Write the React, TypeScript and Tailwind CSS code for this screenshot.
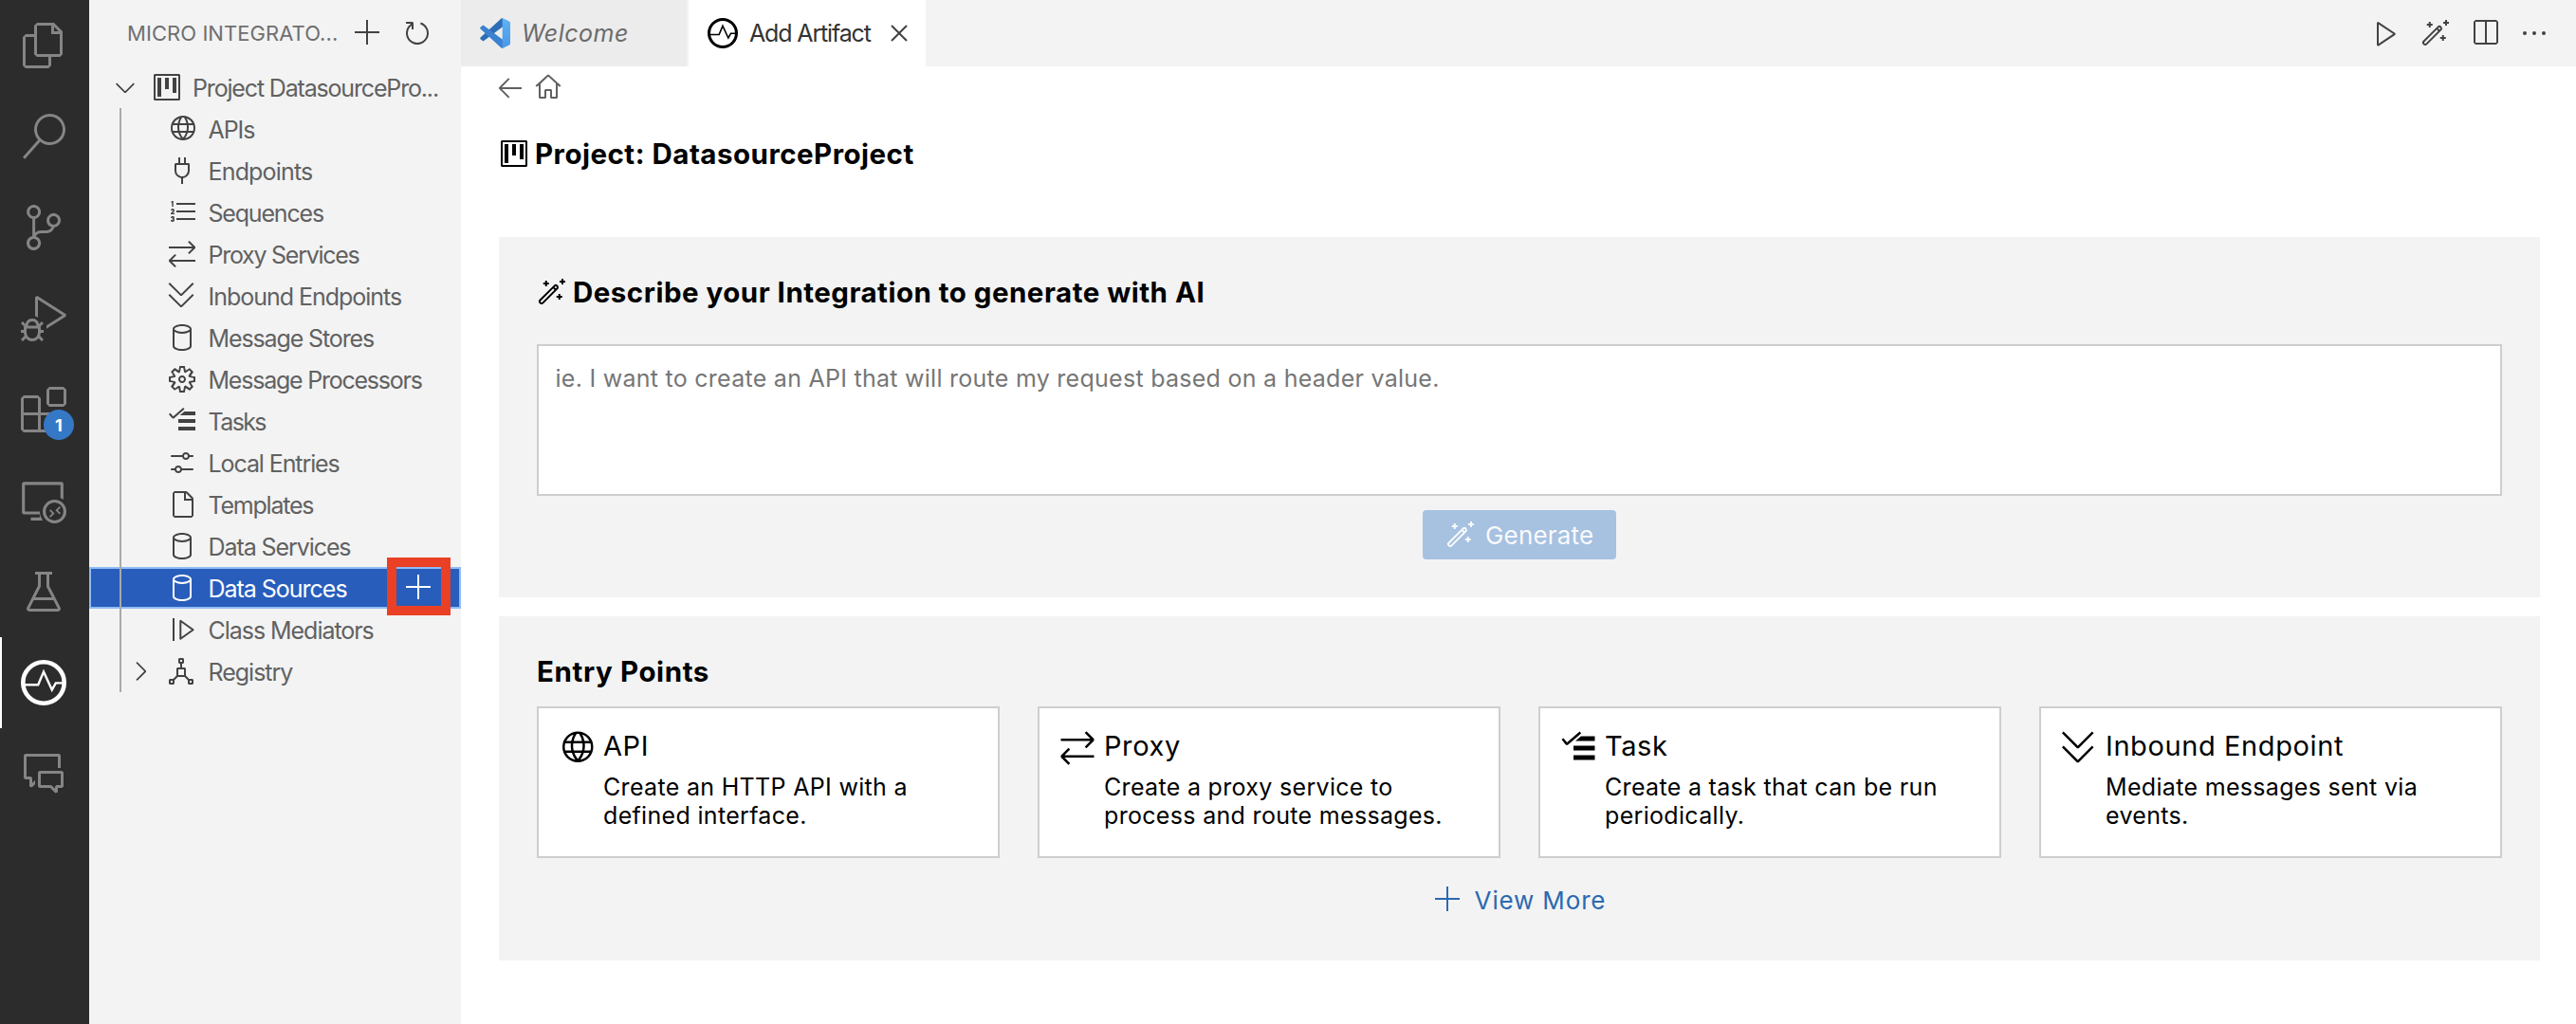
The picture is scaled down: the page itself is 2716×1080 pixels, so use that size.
import type { ReactNode } from "react";
import type { IconType } from "react-icons";
import {
  VscAdd,
  VscArrowLeft,
  VscArrowSwap,
  VscBeaker,
  VscChevronDown,
  VscChevronRight,
  VscClose,
  VscCommentDiscussion,
  VscDatabase,
  VscDebugAlt,
  VscEllipsis,
  VscExtensions,
  VscFile,
  VscFiles,
  VscFoldDown,
  VscGear,
  VscGlobe,
  VscHome,
  VscListOrdered,
  VscPlay,
  VscPlug,
  VscProject,
  VscRefresh,
  VscRemoteExplorer,
  VscSearch,
  VscSettings,
  VscSourceControl,
  VscSplitHorizontal,
  VscTasklist,
  VscTypeHierarchy,
  VscWand,
} from "react-icons/vsc";

function PulseLogo({ className }: { className: string }) {
  return (
    <svg viewBox="0 0 48 48" fill="none" stroke="currentColor" className={className}>
      <circle cx="24" cy="24" r="21.7" strokeWidth="4.6" />
      <path d="M4 26.2H18.2L24 12.5L32.8 31.6L36.8 24.4H44" strokeWidth="2.4" />
    </svg>
  );
}

function VsCodeLogo({ className }: { className: string }) {
  return (
    <svg viewBox="0 0 32 32" className={className}>
      <defs>
        <linearGradient id="vsc-bar" x1="0" y1="0" x2="0" y2="1">
          <stop offset="0" stopColor="#5fb3f1" />
          <stop offset="1" stopColor="#4a97e8" />
        </linearGradient>
      </defs>
      <path d="M22.5 0.5L0.6 20.4c-.6.5-.6 1.300 0 1.800l1.800 1.600c.5.5 1.200.5 1.800.1L24 9.200V0z" fill="#2d6db6" />
      <path d="M22.5 31.500L0.6 11.600c-.6-.5-.6-1.300 0-1.800l1.800-1.600c.5-.5 1.200-.5 1.800-.1L24 22.800V32z" fill="#3a82cf" />
      <path d="M23.700 0L30.900 3.400C31.600 3.700 32 4.400 32 5.200V26.800C32 27.600 31.600 28.300 30.900 28.600L23.700 32Z" fill="url(#vsc-bar)" />
    </svg>
  );
}

function StepBarIcon({ className }: { className?: string }) {
  return (
    <svg viewBox="0 0 32 32" fill="none" stroke="currentColor" strokeWidth="2" className={className}>
      <path d="M7 4V28" />
      <path d="M14.3 6.800V25.800L27.600 16.300Z" strokeLinejoin="round" />
    </svg>
  );
}

const activities: { icon: IconType; badge?: string }[] = [
  { icon: VscFiles },
  { icon: VscSearch },
  { icon: VscSourceControl },
  { icon: VscDebugAlt },
  { icon: VscExtensions, badge: "1" },
  { icon: VscRemoteExplorer },
  { icon: VscBeaker },
];

function ActivityCell({ children }: { children: ReactNode }) {
  return <div className="relative flex h-24 w-full items-center justify-center pr-0.5">{children}</div>;
}

function ActivityBar() {
  return (
    <nav className="flex w-[94px] shrink-0 flex-col bg-[#2c2c2c] text-[#858585]">
      {activities.map(({ icon: Icon, badge }, i) => (
        <ActivityCell key={i}>
          <Icon className="size-12" />
          {badge && (
            <span className="absolute top-12 left-[46px] flex size-8 items-center justify-center rounded-full bg-[#3478c6] text-[18px] font-bold text-white">
              {badge}
            </span>
          )}
        </ActivityCell>
      ))}
      <ActivityCell>
        <span className="absolute top-0 left-0 h-24 w-0.5 bg-white" />
        <PulseLogo className="size-12 text-white" />
      </ActivityCell>
      <ActivityCell>
        <VscCommentDiscussion className="size-12" />
      </ActivityCell>
    </nav>
  );
}

type Entry = { label: string; icon: IconType | typeof StepBarIcon; track: string; selected?: boolean; expandable?: boolean };

const entries: Entry[] = [
  { label: "APIs", icon: VscGlobe, track: "tracking-[-1.08px]" },
  { label: "Endpoints", icon: VscPlug, track: "tracking-[-0.83px]" },
  { label: "Sequences", icon: VscListOrdered, track: "tracking-[-1.19px]" },
  { label: "Proxy Services", icon: VscArrowSwap, track: "tracking-[-1.26px]" },
  { label: "Inbound Endpoints", icon: VscFoldDown, track: "tracking-[-1.02px]" },
  { label: "Message Stores", icon: VscDatabase, track: "tracking-[-1.12px]" },
  { label: "Message Processors", icon: VscGear, track: "tracking-[-1.23px]" },
  { label: "Tasks", icon: VscTasklist, track: "tracking-[-1.6px]" },
  { label: "Local Entries", icon: VscSettings, track: "tracking-[-1.09px]" },
  { label: "Templates", icon: VscFile, track: "tracking-[-1.22px]" },
  { label: "Data Services", icon: VscDatabase, track: "tracking-[-1.08px]" },
  { label: "Data Sources", icon: VscDatabase, track: "tracking-[-1.02px]", selected: true },
  { label: "Class Mediators", icon: StepBarIcon, track: "tracking-[-1.04px]" },
  { label: "Registry", icon: VscTypeHierarchy, track: "tracking-[-1.01px]", expandable: true },
];

function TreeRow({ label, icon: Icon, track, selected, expandable }: Entry) {
  return (
    <div
      className={
        selected
          ? "relative flex h-11 items-center bg-[#285dbb] text-white outline-2 -outline-offset-2 outline-[#90bcf5]"
          : "flex h-11 items-center text-[#424242]"
      }
    >
      <span className="flex w-[82px] justify-end pr-3">
        {expandable && <VscChevronRight className="size-8" />}
      </span>
      <Icon className="size-8" />
      <span className={`ml-[11.5px] pt-[3px] text-[25px] ${track} ${selected ? "text-white" : "text-[#616161]"}`}>{label}</span>
      {selected && (
        <span className="absolute top-[-10px] right-[11px] flex h-[61px] w-[67px] items-center border-10 border-[#ea4025] pt-[3px] pl-2">
          <VscAdd className="size-8" />
        </span>
      )}
    </div>
  );
}

function Sidebar() {
  return (
    <aside className="flex w-[392px] shrink-0 flex-col bg-[#f3f3f3]">
      <header className="flex h-[70px] items-center pl-10 text-[#424242]">
        <span className="w-[238px] text-[22px] tracking-[0.06px] text-[#6f6f6f]">MICRO INTEGRATO...</span>
        <VscAdd className="size-8" />
        <VscRefresh className="ml-5 size-8" />
      </header>
      <div className="relative">
        <div className="flex h-11 items-center pl-[22px] text-[#424242]">
          <VscChevronDown className="size-8" />
          <VscProject className="ml-3 size-8" />
          <span className="ml-[11px] pt-[3px] text-[25px] tracking-[-1.165px] text-[#616161]">
            Project DatasourcePro...
          </span>
        </div>
        {entries.map((e) => (
          <TreeRow key={e.label} {...e} />
        ))}
        <span className="absolute top-11 bottom-0 left-8 w-0.5 bg-[#a9a9a9]" />
      </div>
    </aside>
  );
}

function TabBar() {
  return (
    <div className="flex h-[70px] bg-[#f3f3f3]">
      <div className="flex w-[240px] items-center border-r-2 border-[#f3f3f3] bg-[#ececec] pl-5">
        <VsCodeLogo className="size-8" />
        <span className="ml-3 pt-0.5 text-[25px] tracking-[0.5px] text-[#6b6b6b] italic">Welcome</span>
      </div>
      <div className="flex w-[250px] items-center bg-white pl-5">
        <PulseLogo className="size-8 text-black" />
        <span className="ml-3 pt-0.5 text-[25px] tracking-[-1.15px] text-[#333333]">Add Artifact</span>
        <VscClose className="ml-3.5 size-8 text-[#424242]" />
      </div>
      <div className="flex flex-1 items-center justify-end gap-5 pr-7 text-[#424242]">
        <VscPlay className="size-8" />
        <VscWand className="size-8" />
        <VscSplitHorizontal className="size-8" />
        <VscEllipsis className="size-8" />
      </div>
    </div>
  );
}

const cards: { title: string; lines: [string, string]; icon: IconType }[] = [
  { title: "API", lines: ["Create an HTTP API with a", "defined interface."], icon: VscGlobe },
  { title: "Proxy", lines: ["Create a proxy service to", "process and route messages."], icon: VscArrowSwap },
  { title: "Task", lines: ["Create a task that can be run", "periodically."], icon: VscTasklist },
  { title: "Inbound Endpoint", lines: ["Mediate messages sent via", "events."], icon: VscFoldDown },
];

function EntryCard({ title, lines, icon: Icon }: (typeof cards)[number]) {
  return (
    <div className="flex h-40 gap-2 border-2 border-[#cecece] bg-white pt-[22px] pl-5">
      <Icon className="size-10 shrink-0" />
      <div>
        <div className="text-[29px] leading-[36px] tracking-[0.6px]">{title}</div>
        <div className="mt-2.5 text-[25px] leading-[30px] tracking-[0.32px]">
          {lines[0]}
          <br />
          {lines[1]}
        </div>
      </div>
    </div>
  );
}

export default function App() {
  return (
    <div className="flex h-[1080px] w-[2716px] overflow-hidden bg-white font-['Inter','Liberation_Sans',sans-serif] text-black">
      <ActivityBar />
      <Sidebar />
      <main className="flex min-w-0 flex-1 flex-col">
        <TabBar />
        <div className="flex flex-col pr-[38px] pl-10">
          <div className="flex h-11 items-center gap-2 text-[#616161]">
            <VscArrowLeft className="-ml-1 size-8" />
            <VscHome className="size-8" />
          </div>
          <h1 className="mt-[26px] flex h-11 items-center text-[29.5px] font-bold tracking-[0.49px]">
            <VscProject className="size-8" />
            <span className="ml-1.5">Project: DatasourceProject</span>
          </h1>

          <section className="mt-[66px] h-[380px] bg-[#f3f3f3] px-10 pt-9">
            <h2 className="flex h-11 items-center text-[29.5px] font-bold tracking-[0.485px]">
              <VscWand className="size-8" />
              <span className="ml-1.5">Describe your Integration to generate with AI</span>
            </h2>
            <div className="mt-[33px] h-40 border-2 border-[#cecece] bg-white pt-[19px] pl-[17.5px] text-[25px] leading-[30px] tracking-[0.267px] text-[#767676]">
              ie. I want to create an API that will route my request based on a header value.
            </div>
            <div className="mt-[15px] flex justify-center">
              <button className="flex h-[52px] w-[204px] items-center rounded bg-[#a7c1e1] pl-6 text-[26px] tracking-[0.18px] text-[#f9fafc]">
                <VscWand className="size-8" />
                <span className="ml-2.5 pt-px">Generate</span>
              </button>
            </div>
          </section>

          <section className="mt-5 h-[363px] bg-[#f3f3f3] px-10 pt-9">
            <h2 className="flex h-11 items-center text-[29.5px] font-bold tracking-[0.6px]">Entry Points</h2>
            <div className="mt-[15px] grid grid-cols-4 gap-10">
              {cards.map((c) => (
                <EntryCard key={c.title} {...c} />
              ))}
            </div>
            <div className="mt-[18px] flex h-[52px] items-center justify-center text-[26px] tracking-[0.85px] text-[#2c69b0]">
              <VscAdd className="size-8" />
              <span className="ml-3 pt-px">View More</span>
            </div>
          </section>
        </div>
      </main>
    </div>
  );
}
